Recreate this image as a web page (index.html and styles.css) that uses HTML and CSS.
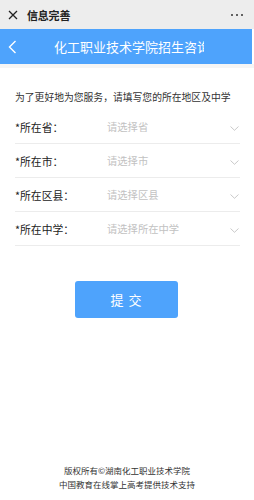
FILE: index.html
```html
<!DOCTYPE html>
<html lang="zh">
<head>
<meta charset="utf-8">
<link rel="stylesheet" href="styles.css">
</head>
<body>
<div class="page">
  <div class="topbar">
    <svg class="close" width="10" height="10" viewBox="0 0 10 10"><path d="M1 1L9 9M9 1L1 9" stroke="#222" stroke-width="1.3" fill="none"/></svg>
    <span class="toptitle">信息完善</span>
    <span class="more"><i></i><i></i><i></i></span>
  </div>
  <div class="header">
    <svg class="back" width="9" height="14" viewBox="0 0 9 14"><path d="M7.5 1L1.5 7L7.5 13" stroke="#fff" stroke-width="1.4" fill="none"/></svg>
    <div class="title">化工职业技术学院招生咨询</div>
  </div>
  <div class="strip"></div>
  <div class="content">
    <p class="intro">为了更好地为您服务，请填写您的所在地区及中学</p>
    <div class="row"><span class="label">*所在省：</span><span class="ph">请选择省</span><svg class="chev" width="9" height="5" viewBox="0 0 9 5"><path d="M0.5 0.5L4.5 4.3L8.5 0.5" stroke="#c4c4c4" stroke-width="0.9" fill="none"/></svg></div>
    <div class="row"><span class="label">*所在市：</span><span class="ph">请选择市</span><svg class="chev" width="9" height="5" viewBox="0 0 9 5"><path d="M0.5 0.5L4.5 4.3L8.5 0.5" stroke="#c4c4c4" stroke-width="0.9" fill="none"/></svg></div>
    <div class="row"><span class="label">*所在区县：</span><span class="ph">请选择区县</span><svg class="chev" width="9" height="5" viewBox="0 0 9 5"><path d="M0.5 0.5L4.5 4.3L8.5 0.5" stroke="#c4c4c4" stroke-width="0.9" fill="none"/></svg></div>
    <div class="row"><span class="label">*所在中学：</span><span class="ph">请选择所在中学</span><svg class="chev" width="9" height="5" viewBox="0 0 9 5"><path d="M0.5 0.5L4.5 4.3L8.5 0.5" stroke="#c4c4c4" stroke-width="0.9" fill="none"/></svg></div>
    <div class="btnwrap"><button class="submit">提 交</button></div>
  </div>
  <div class="footer">
    <div>版权所有©湖南化工职业技术学院</div>
    <div>中国教育在线掌上高考提供技术支持</div>
  </div>
</div>
</body>
</html>
```
FILE: styles.css
```css
* { box-sizing: border-box; }
html, body { margin: 0; padding: 0; background: #fff; }
body { font-family: "Noto Sans CJK SC", "Noto Sans", sans-serif; }
.page { display: flex; flex-direction: column; min-height: 500px; width: 254px; }
.topbar { height: 29px; background: #ededed; display: flex; align-items: center; padding: 0 11px 0 8px; }
.close { display: block; }
.toptitle { margin-left: 9px; font-size: 11px; font-weight: 700; color: #222; letter-spacing: -0.2px; }
.more { margin-left: auto; display: flex; gap: 3px; }
.more i { width: 2px; height: 2px; background: #333; border-radius: 50%; display: block; }
.header { height: 35px; background: #4ea3fc; display: flex; align-items: center; padding-left: 8px; margin-right: 2px; }
.back { display: block; }
.title { margin-left: 37px; width: 150px; overflow: hidden; white-space: nowrap; color: #fff; font-size: 13px; line-height: 16px; }
.strip { height: 4px; background: #f5f5f5; }
.content { padding: 0 14px 0 15px; }
.intro { margin: 22px 0 6px; font-size: 9.8px; line-height: 14px; color: #333; white-space: nowrap; }
.row { height: 34px; border-bottom: 1px solid #ececec; display: flex; align-items: center; position: relative; }
.label { width: 92px; font-size: 10.8px; color: #222; }
.ph { font-size: 10.3px; color: #c2c2c2; }
.chev { margin-left: auto; margin-right: 1px; margin-top: 4px; display: block; }
.btnwrap { padding-top: 35px; padding-left: 60px; }
.submit { width: 103px; height: 37px; border: 0; border-radius: 3px; background: #4ea3fc; color: #fff; font-family: inherit; font-size: 13px; padding: 0; letter-spacing: 1px; }
.footer { margin-top: auto; padding-bottom: 9px; text-align: center; font-size: 8.5px; line-height: 14px; color: #333; }
```
